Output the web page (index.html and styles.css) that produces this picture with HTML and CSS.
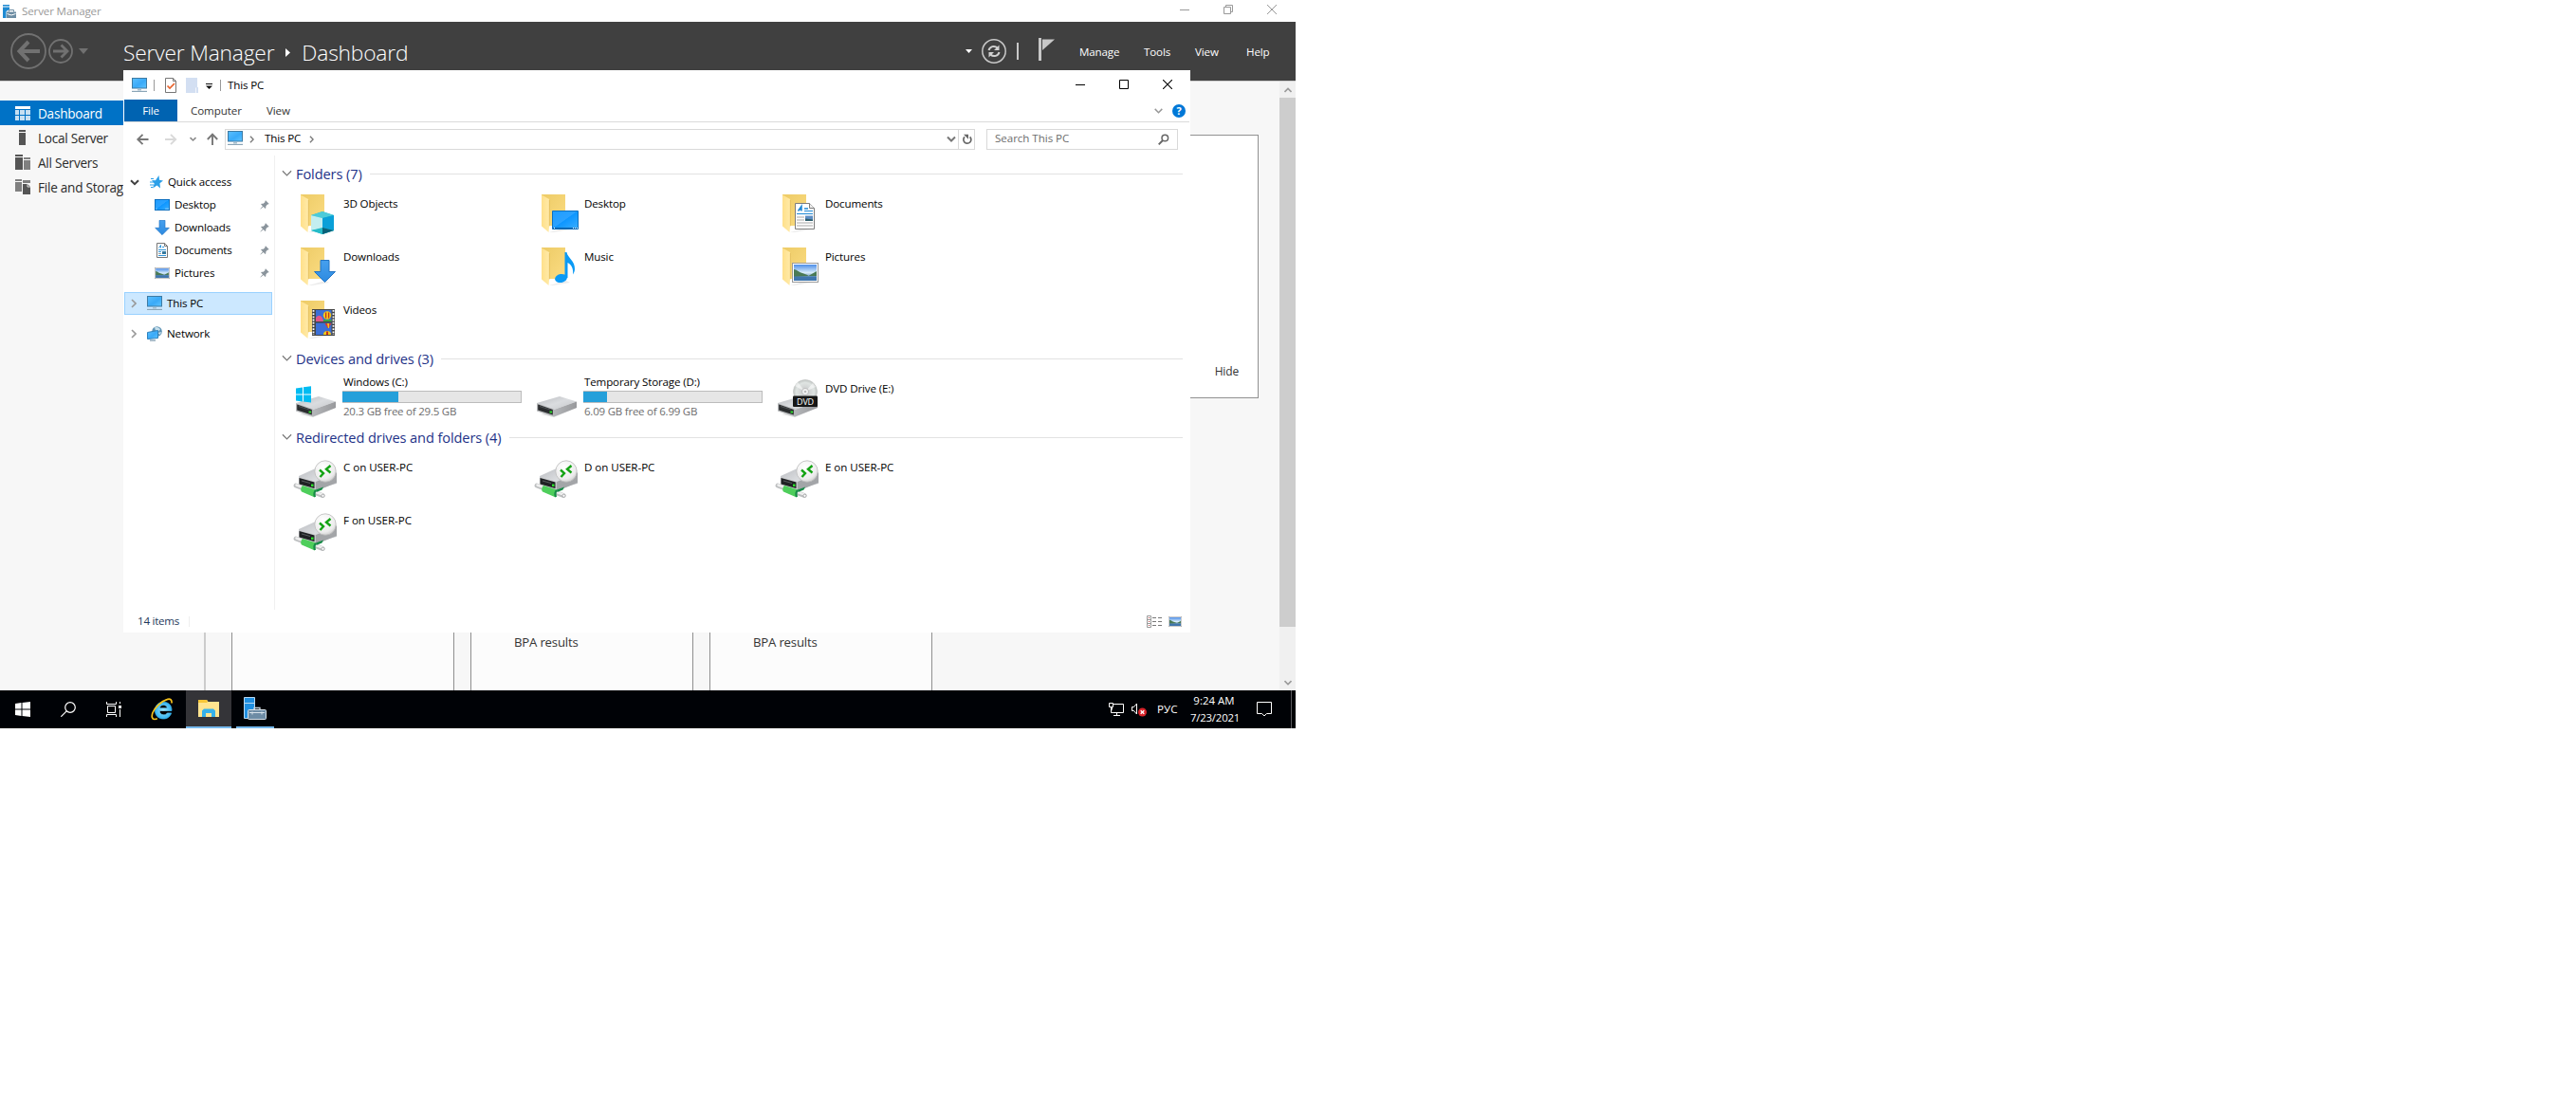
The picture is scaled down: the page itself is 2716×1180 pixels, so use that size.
FILE: index.html
```html
<!DOCTYPE html>
<html lang="en">
<head>
<meta charset="utf-8">
<title>Server Manager</title>
<link rel="stylesheet" href="styles.css">
</head>
<body>
<svg class="defs" aria-hidden="true">
  <defs>
    <linearGradient id="gBlue" x1="0" y1="0" x2="1" y2="1"><stop offset="0" stop-color="#5cc0ff"/><stop offset=".55" stop-color="#3aaaf8"/><stop offset="1" stop-color="#5fc4ff"/></linearGradient>
    <linearGradient id="gDesk" x1="0" y1="0" x2="1" y2="1"><stop offset="0" stop-color="#1f9cff"/><stop offset=".48" stop-color="#2ba2ff"/><stop offset=".5" stop-color="#0d96ff"/><stop offset="1" stop-color="#3aaeff"/></linearGradient>
    <linearGradient id="gBack" x1="0" y1="0" x2="1" y2="1"><stop offset="0" stop-color="#edcb66"/><stop offset="1" stop-color="#fbdc82"/></linearGradient>
    <linearGradient id="gFlap" x1="0" y1="0" x2="1" y2="0"><stop offset="0" stop-color="#ffe08a"/><stop offset="1" stop-color="#ffeaa8"/></linearGradient>
    <linearGradient id="gTop" x1="0" y1="0" x2="1" y2="1"><stop offset="0" stop-color="#b9bbbf"/><stop offset=".5" stop-color="#dadcdf"/><stop offset="1" stop-color="#c6c8cb"/></linearGradient>
    <linearGradient id="gSide" x1="0" y1="0" x2="1" y2="0"><stop offset="0" stop-color="#b4b6b9"/><stop offset="1" stop-color="#98999c"/></linearGradient>
    <linearGradient id="gSky" x1="0" y1="0" x2="0" y2="1"><stop offset="0" stop-color="#4e8ee8"/><stop offset=".5" stop-color="#d7ecfa"/><stop offset=".72" stop-color="#7fa5c4"/><stop offset="1" stop-color="#3a6ea5"/></linearGradient>
    <linearGradient id="gArrow" x1="0" y1="0" x2="0" y2="1"><stop offset="0" stop-color="#46a0ee"/><stop offset="1" stop-color="#2d8ae0"/></linearGradient>
    <radialGradient id="gBall" cx=".4" cy=".3" r=".8"><stop offset="0" stop-color="#fff"/><stop offset=".7" stop-color="#ececec"/><stop offset="1" stop-color="#c4c4c4"/></radialGradient>
    <radialGradient id="gDisc"><stop offset="0" stop-color="#eee"/><stop offset=".3" stop-color="#cfd1d1"/><stop offset=".75" stop-color="#dfe4e2"/><stop offset="1" stop-color="#c2c6c4"/></radialGradient>
    <radialGradient id="gIe"><stop offset="0" stop-color="#9be6ff"/><stop offset="1" stop-color="#35b4f0"/></radialGradient>
  </defs>

  <symbol id="pc" viewBox="0 0 16 16">
    <rect x=".5" y=".5" width="15" height="10.5" fill="url(#gBlue)" stroke="#3f7ba3"/>
    <path d="M6 12h4v1.500H6z" fill="#a9c0cf"/><path d="M0 13.800h16v1.200H0z" fill="#8ba5b7"/>
  </symbol>
  <symbol id="desk" viewBox="0 0 16 12">
    <rect x=".5" y=".5" width="15" height="11" fill="url(#gDesk)" stroke="#0e70c0"/>
    <path d="M1.500 10.200h1M11.500 10.200h3" stroke="#fff" stroke-dasharray=".8 .4" stroke-width=".8"/>
  </symbol>
  <symbol id="down" viewBox="0 0 24 24">
    <path d="M7.500.5h9V12.500H23L12 23.500 1 12.500h6.500z" fill="url(#gArrow)" stroke="#2374c4"/>
  </symbol>
  <symbol id="doc" viewBox="0 0 21 28">
    <path d="M.5.5h15l5 5v22H.5z" fill="#fff" stroke="#7d7d7d"/><path d="M15.500.5v5h5" fill="#eee" stroke="#7d7d7d"/>
    <path d="M3.500 8.500 7 3.500V8.500M4.500 7H7M10 6h4" stroke="#1e88d4" stroke-width="1.500" fill="none"/>
    <path d="M10 8.500h9M2 11.500h17" stroke="#1e88d4" stroke-width="1.200"/>
    <path d="M2 15h8M2 18h8M2 21h17M2 24h17" stroke="#a7a7a7"/><rect x="11" y="13.500" width="8" height="5.500" fill="#5d8ec4"/><path d="M11 16.500l8 1V19h-8z" fill="#2e5d6b"/>
  </symbol>
  <symbol id="pic" viewBox="0 0 28 21">
    <rect x=".5" y=".5" width="27" height="20" fill="#fff" stroke="#9b9b9b"/>
    <rect x="2" y="2" width="24" height="17" fill="url(#gSky)"/>
    <path d="M2 7c3 0 5 3 9 4l8 3-17 1zM26 9l-7 4-3 1h10z" fill="#4a7a55"/><path d="M2 14.500h24V19H2z" fill="#4076ad"/>
  </symbol>
  <symbol id="pin" viewBox="0 0 10 10">
    <path d="M6 .3 9.700 4 8.600 4.600 8 4.500 6.300 6.400v1.800l-.7.7L3.800 7 .7 9.600.4 9.300 3 6.200 1.100 4.400l.7-.7h1.800L5.500 2 5.400 1.200z" fill="#8a949c"/>
  </symbol>
  <symbol id="folder" viewBox="0 0 48 48">
    <path d="M9 3h25v33H9z" fill="url(#gBack)"/>
    <path d="M17 43l18-5 4 2-18 3z" fill="#ececec"/>
    <path d="M9 3.500 17 8v29.500L16.500 43 9 36.500z" fill="url(#gFlap)"/><path d="M17.300 9v27.500" stroke="#dcb654" stroke-width=".6"/>
  </symbol>
  <symbol id="drive" viewBox="0 0 42 22">
    <path d="M4 19l14 3 24-10-2-1z" fill="#e6e6e6"/>
    <path d="M0 7 24 0 42 5.500 18 14z" fill="url(#gTop)"/>
    <path d="M18 14 42 5.500V12L18 21.500z" fill="url(#gSide)"/>
    <path d="M0 7 18 13.500v8L0 15.500z" fill="#b5b7b9"/>
    <path d="M1.200 8.600 16.800 14v5.500L1.200 14.500z" fill="#2a2c2e"/><path d="M3 10.500 14 14" stroke="#4f5255"/><rect x="13.500" y="15.500" width="2.500" height="2" fill="#2cdc2c"/>
  </symbol>
  <symbol id="remote" viewBox="0 0 48 42">
    <path d="M6 17 28 7l18 6v12L22 31 6 25z" fill="url(#gTop)"/>
    <path d="M24 23 46 13.500V24L24 33z" fill="#a3a5a8"/>
    <path d="M6 18 24 23v9.500L6 27z" fill="#c6c8ca"/><path d="M6.500 19 22.500 23.500V30L6.500 25.500z" fill="#1f2123"/><path d="M9 22l9 2.500" stroke="#565a5d"/><rect x="19" y="25.500" width="2.500" height="2.500" fill="#2be02b"/>
    <path d="M3 27 31 37.500" stroke="#bdbfc0" stroke-width="4.800" stroke-linecap="round"/><path d="M3.500 26.500 30.500 36.300" stroke="#efefef" stroke-width="2.500" stroke-linecap="round"/>
    <path d="M10 27 24 31.500c-2 2-2 5-1 8L9 33.500c-1.500-2-.5-5 1-6.500z" fill="#4ece5b"/><path d="M24 32c-2 2-2 4-1 7" stroke="#168b47" stroke-width="2.200" fill="none"/><path d="M24 31.500l8-3-1.500 3-6 2.500z" fill="#168b47"/>
    <circle cx="31.500" cy="37.800" r="1.600" fill="#fff" stroke="#a9abac"/>
    <circle cx="34" cy="12" r="11.200" fill="url(#gBall)" stroke="#bbb" stroke-width=".8"/>
    <path d="M28 10.500 32 14 28.500 18" fill="none" stroke="#14a314" stroke-width="2.400"/><path d="M39.500 6 35 9.800 39.500 13.500" fill="none" stroke="#14a314" stroke-width="2.400"/>
  </symbol>
  <symbol id="chev" viewBox="0 0 12 8"><path d="M1 1l5 5 5-5" fill="none" stroke="currentColor" stroke-width="1.300"/></symbol>
  <symbol id="chevR" viewBox="0 0 6 10"><path d="M1 1l4 4-4 4" fill="none" stroke="currentColor" stroke-width="1.600"/></symbol>
  <symbol id="toolbox" viewBox="0 0 24 24">
    <path d="M.5.5h11v22H.5z" fill="#1f8fe0" stroke="#b8d8f0"/><path d="M0 6.500h12" stroke="#b8d8f0"/>
    <path d="M11 14v-2.500h6V14" fill="none" stroke="#c4d4df" stroke-width="1.300"/>
    <rect x="4.500" y="13.500" width="19" height="10" rx="1" fill="#6d8ca5" stroke="#d7e2ea"/><path d="M6 16.500h16M9 15.500v3M19 15.500v3" stroke="#d7e2ea"/>
  </symbol>
</svg>

<main class="screen">
  <header class="sm-title">
    <svg class="sm-logo" viewBox="0 0 14 14"><path d="M0 0h7v1.500H0zM0 2.500h7V5L3.500 7v7H0z" fill="#1e8ad2"/><path d="M4 7.500h10V14H4z" fill="#6d8da3"/><path d="M6.500 7.500V5.500h5v2" fill="none" stroke="#6d8da3"/><path d="M4.500 9.500 9 11l4.500-1.500" stroke="#fff" fill="none"/></svg>
    <span class="sm-name">Server Manager</span>
    <div class="sm-controls">
      <svg width="10" height="10" viewBox="0 0 10 10"><path d="M0 5.500h10" stroke="#999"/></svg>
      <svg width="10" height="10" viewBox="0 0 10 10"><path d="M.5 2.500h7v7h-7zM2.500 2.500v-2h7v7h-2" fill="none" stroke="#999"/></svg>
      <svg width="10" height="10" viewBox="0 0 10 10"><path d="M0 0l10 10M10 0 0 10" stroke="#999"/></svg>
    </div>
  </header>

  <div class="sm-header">
    <svg class="sm-nav" viewBox="0 0 84 40">
      <g fill="none" stroke="#717171"><circle cx="19" cy="20" r="18" stroke-width="1.800"/><circle cx="53" cy="20" r="12" stroke-width="1.800"/><path d="M9 20h22M19 10 9.500 20 19 30" stroke-width="4"/><path d="M45 20h14M53.500 13.500l6.500 6.500-6.500 6.500" stroke-width="2.800"/></g>
      <path d="M72 17h10l-5 6z" fill="#717171"/>
    </svg>
    <h1 class="crumb"><span>Server Manager</span><svg width="5" height="9" viewBox="0 0 5 9"><path d="M0 0l5 4.500L0 9z" fill="#fff"/></svg><span>Dashboard</span></h1>
    <div class="sm-tools">
      <svg width="7" height="4" viewBox="0 0 7 4"><path d="M0 0h7L3.500 4z" fill="#fff"/></svg>
      <svg class="refresh" viewBox="0 0 26 26"><circle cx="13" cy="13" r="12.200" fill="none" stroke="#c8c8c8" stroke-width="1.500"/><path d="M7.500 12c1-4 6-5.500 9-2.500M18.500 14c-1 4-6 5.500-9 2.500" fill="none" stroke="#d0d0d0" stroke-width="2"/><path d="M18.500 6.500V12H13zM7.500 19.500V14H13z" fill="#d0d0d0"/></svg>
      <i class="bar"></i>
      <svg class="flag" viewBox="0 0 17 24"><path d="M0 0h3v24H0z" fill="#c8c8c8"/><path d="M4 1.500h13L4 13z" fill="#c8c8c8"/></svg>
      <nav class="sm-menu"><span>Manage</span><span>Tools</span><span>View</span><span>Help</span></nav>
    </div>
  </div>

  <div class="sm-body">
    <aside class="sm-side">
      <div class="side-item active"><svg width="16" height="15" viewBox="0 0 16 15"><path d="M0 0h16v3H0z" fill="#fff"/><path d="M0 4h4v5H0zM5 4h5v5H5zM11 4h5v5h-5zM0 10h4v5H0zM5 10h5v5H5zM11 10h5v5h-5z" fill="#c7e0f2"/></svg><span>Dashboard</span></div>
      <div class="side-item"><svg width="16" height="16" viewBox="0 0 16 16"><path d="M4 0h7v2H4zM4 3h7v13H4z" fill="#555"/></svg><span>Local Server</span></div>
      <div class="side-item"><svg width="16" height="16" viewBox="0 0 16 16"><path d="M0 0h8v2H0zM0 3h8v13H0z" fill="#555"/><path d="M9 3h7v2H9zM9 6h7v10H9z" fill="#808080"/></svg><span>All Servers</span></div>
      <div class="side-item"><svg width="16" height="16" viewBox="0 0 16 16"><path d="M0 0h7v2H0zM0 3h7v10H0zM8 1h8v3H8z" fill="#808080"/><path d="M8 5h5l3 3v8H8z" fill="#555"/><path d="M13 5v3h3" stroke="#fff" fill="none" stroke-width=".8"/></svg><span>File and Storage</span></div>
    </aside>
    <section class="sm-main">
      <div class="welcome"><span>Hide</span></div>
      <div class="roles">
        <div class="role"></div>
        <div class="role"><span>BPA results</span></div>
        <div class="role"><span>BPA results</span></div>
      </div>
    </section>
    <div class="scroll">
      <svg width="8" height="6" viewBox="0 0 8 6"><path d="M.5 5 4 1.500 7.500 5" fill="none" stroke="#9a9a9a" stroke-width="1.600"/></svg>
      <i class="thumb"></i>
      <svg width="8" height="6" viewBox="0 0 8 6"><path d="M.5 1 4 4.500 7.500 1" fill="none" stroke="#9a9a9a" stroke-width="1.600"/></svg>
    </div>
  </div>

  <footer class="taskbar">
    <div class="task"><svg width="16" height="16" viewBox="0 0 16 16"><path d="M0 2l6.500-1v6.500H0zM7.500.9 16 0v7.500H7.500zM0 8.500h6.500V15L0 14zM7.500 8.500H16V16l-8.500-1z" fill="#fff"/></svg></div>
    <div class="task"><svg width="16" height="16" viewBox="0 0 16 16"><circle cx="10" cy="6" r="5.300" fill="none" stroke="#fff" stroke-width="1.200"/><path d="M6.200 9.800.3 15.700" stroke="#fff" stroke-width="1.200"/></svg></div>
    <div class="task"><svg width="16" height="16" viewBox="0 0 16 16"><path d="M.5 0v2.500h10V0M.5 16v-2.500h10V16M1.500 4.500h8v7h-8zM14.500 0v2M14.500 8v8" fill="none" stroke="#fff"/><path d="M13 4h3v3h-3z" fill="#fff"/></svg></div>
    <div class="task ie"><svg width="24" height="24" viewBox="0 0 24 24"><path d="M22 13.500H9.200c.2 3 2 4.300 4.300 4.300 1.800 0 3-.7 3.800-1.900h4.300c-1.200 3.900-4.300 6.100-8.300 6.100-5.200 0-8.900-3.500-8.900-8.800 0-5.200 3.800-8.900 8.900-8.900 5.500 0 9 3.700 8.700 9.200zM9.300 10.800h8c-.2-2.200-1.800-3.400-3.900-3.400-2.300 0-3.700 1.300-4.100 3.400z" fill="url(#gIe)" stroke="url(#gIe)" stroke-width=".7"/><path d="M22 5.500C22.500 2 20.500.4 17 1.600 11 3.500 4.500 9.500 2 15.500c-1.500 4-.8 7 2 7 .8 0 1.800-.2 2.800-.7" fill="none" stroke="#f5c21c" stroke-width="1.700"/></svg></div>
    <div class="task current"><svg width="22" height="18" viewBox="0 0 22 18"><path d="M0 0h9l1.500 2H22v16H0z" fill="#ffe48f"/><path d="M0 0h9l1 2-1 1H0z" fill="#f7c637"/><path d="M4 18v-6.500L6 9.500h10l2 2V18h-4v-4H8v4z" fill="#35b1ea"/></svg></div>
    <div class="task open"><svg width="24" height="24"><use href="#toolbox"/></svg></div>
    <div class="tray">
      <svg width="16" height="14" viewBox="0 0 16 14"><path d="M4 1.500h11.500v9H3.500V5M8.500 10.500v3M5 13.500h7" fill="none" stroke="#fff"/><path d="M.5.500h4v4h-4zM2.500 4.500v6h2" fill="#000" stroke="#fff"/></svg>
      <svg class="vol" width="16" height="15" viewBox="0 0 16 15"><path d="M.5 4.500h2L5.500 1v11L2.500 8.500h-2z" fill="none" stroke="#fff"/><circle cx="11.500" cy="10" r="4.500" fill="#d8232a"/><path d="M9.700 8.200l3.600 3.600M13.300 8.200l-3.600 3.600" stroke="#fff" stroke-width="1.300"/></svg>
      <span class="lang">РУС</span>
      <div class="clock"><span class="time">9:24 AM</span><span>7/23/2021</span></div>
      <svg class="note" width="16" height="16" viewBox="0 0 16 16"><path d="M.5.5h15v12h-5L8 15l-2.500-2.500h-5z" fill="none" stroke="#fff"/></svg>
      <i class="peek"></i>
    </div>
  </footer>

  <section class="explorer">
    <header class="ex-title">
      <svg class="t-pc"><use href="#pc"/></svg><i class="sep"></i>
      <svg class="t-doc" viewBox="0 0 12 16"><path d="M.5.5h8l3 3v12H.5z" fill="#fff" stroke="#777"/><path d="M8.500.5v3h3" fill="none" stroke="#777"/><path d="M2.500 8.500 5 11l5-5" fill="none" stroke="#e8622c" stroke-width="1.700"/></svg>
      <svg class="t-new" viewBox="0 0 13 16"><path d="M0 0h12v10h1v6H0z" fill="#d3dff2"/><path d="M10.500 16v-5.500" stroke="#f2f6fc"/></svg>
      <svg class="t-drop" viewBox="0 0 7 6"><path d="M0 .5h7" stroke="#111"/><path d="M0 2.500h7L3.500 6z" fill="#111"/></svg><i class="sep s2"></i>
      <span>This PC</span>
      <div class="ex-controls">
        <svg width="10" height="10" viewBox="0 0 10 10"><path d="M0 5.500h10" stroke="#000"/></svg>
        <svg width="10" height="10" viewBox="0 0 10 10"><path d="M.5.500h9v9h-9z" fill="none" stroke="#000"/></svg>
        <svg width="10" height="10" viewBox="0 0 10 10"><path d="M0 0l10 10M10 0 0 10" stroke="#000" stroke-width="1.100"/></svg>
      </div>
    </header>
    <div class="ribbon">
      <span class="file">File</span><span class="tab t1">Computer</span><span class="tab">View</span>
      <div class="rhelp"><svg class="rchev" viewBox="0 0 9 6"><path d="M.7.900 4.500 4.700 8.300.9" fill="none" stroke="#999" stroke-width="1.500"/></svg><b>?</b></div>
    </div>
    <div class="address-row">
      <svg class="arrows" viewBox="0 0 88 14"><g fill="none" stroke-width="1.900"><path d="M13.500 7H2.500M7.500 1.800 2.300 7l5.200 5.200" stroke="#777"/><path d="M31 7h11M37 1.800 42.200 7 37 12.200" stroke="#d9d9d9"/><path d="M57.500 5.200l3 2.800 3-2.800" stroke="#8a8a8a" stroke-width="1.600"/><path d="M81 13V2M75.800 7 81 1.700 86.200 7" stroke="#777"/></g></svg>
      <div class="address">
        <svg class="t-pc"><use href="#pc"/></svg><svg class="cr"><use href="#chevR"/></svg><span>This PC</span><svg class="cr c2"><use href="#chevR"/></svg>
        <div class="a-end"><svg width="10" height="7" viewBox="0 0 10 7"><path d="M1 1.500l4 4 4-4" fill="none" stroke="#777" stroke-width="2"/></svg><i></i><svg width="10" height="12" viewBox="0 0 10 12"><path d="M7.600 3.300A4 4 0 1 1 2 3.400" fill="none" stroke="#666" stroke-width="1.700"/><path d="M1 .7h5v5z" fill="#666"/></svg></div>
      </div>
      <div class="search"><span>Search This PC</span><svg width="12" height="12" viewBox="0 0 12 12"><circle cx="7.300" cy="4.500" r="3.300" fill="none" stroke="#666" stroke-width="1.500"/><path d="M5 7 .7 11.300" stroke="#666" stroke-width="1.900"/></svg></div>
    </div>
    <div class="ex-body">
      <aside class="tree">
        <div class="node root"><svg class="exp dn" viewBox="0 0 10 7"><path d="M1 1.300l4 3.900 4-3.900" fill="none" stroke="#404040" stroke-width="2"/></svg><svg class="n-icon star" viewBox="0 0 14 14"><path d="M9.500 0 10 4.800l4 .7-3.500 2.700.5 5.300-3.500-3L3 13.500l1.700-5L2 5l4 .2z" fill="#2b9fe8"/><path d="M1 3.500h3M0 7h4M0 10h4M1 12.500h2" stroke="#2b9fe8"/></svg><span>Quick access</span></div>
        <div class="node kid"><svg class="k-desk"><use href="#desk"/></svg><span>Desktop</span><svg class="pin"><use href="#pin"/></svg></div>
        <div class="node kid"><svg class="k-down"><use href="#down"/></svg><span>Downloads</span><svg class="pin"><use href="#pin"/></svg></div>
        <div class="node kid"><svg class="k-doc" viewBox="0 0 12 16"><path d="M.5.500h8l3 3v12H.5z" fill="#fff" stroke="#777"/><path d="M8.500.5v3h3" fill="none" stroke="#777"/><path d="M2.500 5.500 4.500 2.500v3M6 4.500h2M2 7.500h8M2 9.500h3M2 13.500h8" fill="none" stroke="#2f94d8"/><path d="M2 11.500h3" stroke="#999"/><path d="M6 9h4v3H6z" fill="#35799f"/></svg><span>Documents</span><svg class="pin"><use href="#pin"/></svg></div>
        <div class="node kid"><svg class="k-pic"><use href="#pic"/></svg><span>Pictures</span><svg class="pin"><use href="#pin"/></svg></div>
        <div class="node root selected"><svg class="exp rt"><use href="#chevR"/></svg><svg class="n-icon"><use href="#pc"/></svg><span>This PC</span></div>
        <div class="node root net"><svg class="exp rt"><use href="#chevR"/></svg><svg class="n-icon" viewBox="0 0 16 16"><circle cx="10.500" cy="5.500" r="5.300" fill="#5e93b5"/><path d="M8 1.500c3-1 5 0 6 2l-2 2-3-1zM11 7l4-1-1 3z" fill="#c5dfec"/><path d="M.5 6.500l11-2v8l-11 1z" fill="url(#gBlue)" stroke="#2f82bd"/><path d="M3 15h6" stroke="#7d9bb0" stroke-width="1.300"/></svg><span>Network</span></div>
      </aside>
      <div class="content">
        <h2 class="group"><svg><use href="#chev"/></svg><span>Folders (7)</span><i></i></h2>
        <div class="tiles folders">
          <div class="tile"><svg class="big" viewBox="0 0 48 48"><use href="#folder" width="48" height="48"/><path d="M20 25l12-4 12 4v16l-12 4-12-4z" fill="#19b5d2"/><path d="M20 25l12-4 12 4-12 3z" fill="#4ccbd9"/><path d="M20 25l12 3v11l-12 2z" fill="#c3eef0"/><path d="M32 28l12-3v16l-12-3z" fill="#0aa0d8"/><path d="M20 41l12-3 12 3-12 4z" fill="#26bcc8"/><path d="M32 38l12 3-12 4z" fill="#0b6178"/></svg><span>3D Objects</span></div>
          <div class="tile"><svg class="big" viewBox="0 0 48 48"><use href="#folder" width="48" height="48"/><path d="M20.500 20.500h27v19h-27z" fill="url(#gDesk)" stroke="#0e70c0"/><path d="M21 38.500h26" stroke="#0e62a8"/><path d="M22 38.500h1M42 38.500h5" stroke="#fff" stroke-dasharray="1 1"/></svg><span>Desktop</span></div>
          <div class="tile"><svg class="big" viewBox="0 0 48 48"><use href="#folder" width="48" height="48"/><use href="#doc" x="22" y="12" width="21" height="28"/></svg><span>Documents</span></div>
          <div class="tile"><svg class="big" viewBox="0 0 48 48"><use href="#folder" width="48" height="48"/><use href="#down" x="22.500" y="16" width="24" height="24"/></svg><span>Downloads</span></div>
          <div class="tile"><svg class="big" viewBox="0 0 48 48"><use href="#folder" width="48" height="48"/><ellipse cx="29.500" cy="35.500" rx="6.500" ry="4.500" fill="#0a9af5" transform="rotate(-10 29.500 35.500)"/><path d="M33.500 8h2c1 6 9 9 8.500 18-.1 2-1 4-2 5.500 1-6-2-11-5.500-12.500V35h-3z" fill="#0a9af5"/></svg><span>Music</span></div>
          <div class="tile"><svg class="big" viewBox="0 0 48 48"><use href="#folder" width="48" height="48"/><use href="#pic" x="19" y="19" width="28" height="21"/></svg><span>Pictures</span></div>
          <div class="tile"><svg class="big" viewBox="0 0 48 48"><use href="#folder" width="48" height="48"/><path d="M21 12h24v28H21z" fill="#454545"/><path d="M22.500 13v26M43.500 13v26" stroke="#fff" stroke-width="1.800" stroke-dasharray="1.800 1.400"/><path d="M25 13h16.500v12H25zM25 26.500h16.500V39H25z" fill="#3b6fd6"/><path d="M25 21c3-4 7-3 8 4h-8z" fill="#e0568a"/><path d="M33 23h8.500v2H33zM33 37h3v2h-3z" fill="#3aa34a"/><circle cx="37" cy="18.500" r="4.200" fill="#f3c51b"/><path d="M35 15.500h1.200v6H35zM38 15.500h1.200v6H38z" fill="#c4311f"/><path d="M34.500 27h7L38.500 32h-1z" fill="#d8392c"/><path d="M37 27h2v5h-1z" fill="#f3c51b"/><path d="M33 39a4 4 0 0 1 8 0z" fill="#f3c51b"/><path d="M36 35.500h2V39h-2z" fill="#c4311f"/></svg><span>Videos</span></div>
        </div>
        <h2 class="group g2"><svg><use href="#chev"/></svg><span>Devices and drives (3)</span><i></i></h2>
        <div class="tiles drives">
          <div class="tile"><svg class="big" viewBox="0 0 48 48"><use href="#drive" x="4" y="22" width="42" height="22"/><path d="M4 13.500l7-1v7H4zM12 12.300l8-1v8.200h-8zM4 20.500h7v7l-7-1zM12 20.500h8V28.500l-8-1z" fill="#00bcf2"/></svg><div class="info"><span>Windows (C:)</span><div class="meter"><i style="width:31.200%"></i></div><small class="fc">20.3 GB free of 29.5 GB</small></div></div>
          <div class="tile"><svg class="big" viewBox="0 0 48 48"><use href="#drive" x="4" y="22" width="42" height="22"/></svg><div class="info"><span>Temporary Storage (D:)</span><div class="meter"><i style="width:13.200%"></i></div><small class="fc">6.09 GB free of 6.99 GB</small></div></div>
          <div class="tile"><svg class="big" viewBox="0 0 48 48"><use href="#drive" x="4" y="22" width="42" height="22"/><circle cx="33" cy="17" r="12.500" fill="url(#gDisc)" stroke="#bcc0be" stroke-width=".6"/><path d="M33 17 22 11l3-4zM33 17l8-9 3 4z" fill="#fff" opacity=".55"/><circle cx="33" cy="17" r="3.500" fill="#f5f5f5" stroke="#aaa" stroke-width=".7"/><circle cx="33" cy="17" r="1.300" fill="#bbb"/><rect x="20" y="21.500" width="26" height="11.500" rx="1" fill="#161616"/><text x="33" y="30.800" class="dvd">DVD</text></svg><span class="dvd-name">DVD Drive (E:)</span></div>
        </div>
        <h2 class="group g3"><svg><use href="#chev"/></svg><span>Redirected drives and folders (4)</span><i></i></h2>
        <div class="tiles remotes">
          <div class="tile"><svg class="big rem"><use href="#remote"/></svg><span>C on USER-PC</span></div>
          <div class="tile"><svg class="big rem"><use href="#remote"/></svg><span>D on USER-PC</span></div>
          <div class="tile"><svg class="big rem"><use href="#remote"/></svg><span>E on USER-PC</span></div>
          <div class="tile"><svg class="big rem"><use href="#remote"/></svg><span>F on USER-PC</span></div>
        </div>
      </div>
    </div>
    <footer class="status">
      <span>14 items</span><i></i>
      <div class="views">
        <svg width="16" height="13" viewBox="0 0 16 13"><path d="M.5.500h4v12h-4zM.5 4.500h4M.5 8.500h4" fill="none" stroke="#999"/><path d="M6 2.500h4M12 2.500h4M6 6.500h4M12 6.500h4M6 10.500h4M12 10.500h4" stroke="#777"/><path d="M2 2h1v1H2zM2 6h1v1H2zM2 10h1v1H2z" fill="#a33"/></svg>
        <svg class="v2" viewBox="0 0 28 21" preserveAspectRatio="none"><use href="#pic" width="28" height="21"/></svg>
      </div>
    </footer>
  </section>
</main>
</body>
</html>
```

FILE: styles.css
```css
* { box-sizing: border-box; }
body { margin: 0; background: #fff; font: 11.6px/16px "Open Sans", "Noto Sans", sans-serif; letter-spacing: -0.15px; color: #000; white-space: nowrap; }
svg { display: block; flex: none; }
i { display: block; flex: none; }
.defs { position: absolute; width: 0; height: 0; }
.screen { position: relative; width: 1366px; height: 768px; display: flex; flex-direction: column; overflow: hidden; }

/* Server Manager window */
.sm-title { height: 23px; display: flex; align-items: center; padding: 0 20px 0 3px; background: #fff; }
.sm-logo { width: 14px; height: 14px; }
.sm-name { margin-left: 6px; color: #999; }
.sm-controls { margin-left: auto; display: flex; gap: 36px; margin-top: -3px; }
.sm-header { height: 62px; background: #404040; display: flex; align-items: center; color: #fff; }
.sm-nav { width: 84px; height: 40px; margin-left: 11px; }
.crumb { margin: 3px 0 0 35px; display: flex; align-items: center; gap: 12px; font-size: 22.8px; line-height: 30px; font-weight: 300; letter-spacing: -0.2px; }
.sm-tools { display: flex; align-items: center; margin-left: auto; padding-right: 28px; }
.refresh { width: 26px; height: 26px; margin-left: 10px; }
.bar { width: 2px; height: 18px; margin-left: 11px; background: #c8c8c8; }
.flag { width: 17px; height: 24px; margin: -4px 0 0 21px; }
.sm-menu { display: flex; margin: 1px 0 0 26px; }
.sm-menu span:nth-child(1) { width: 68px; }
.sm-menu span:nth-child(2) { width: 54px; }
.sm-menu span:nth-child(3) { width: 54px; }
.sm-menu span:nth-child(4) { width: 24px; }
.sm-body { height: 643px; flex: none; display: flex; background: #f7f7f7; border-top: 1px solid #d0d0d0; }
.sm-side { width: 217px; border-right: 2px solid #ccc; padding-top: 20px; }
.side-item { height: 26px; display: flex; align-items: center; gap: 8px; padding-left: 16px; font-size: 13.6px; letter-spacing: -0.25px; color: #2b2b2b; overflow: hidden; }
.side-item span { padding-top: 1px; }
.side-item.active { background: #0072c6; color: #fff; }
.sm-main { width: 1132px; display: flex; flex-direction: column; justify-content: space-between; }
.welcome { width: 1082px; height: 278px; margin: 56px 0 0 28px; border: 1px solid #919191; background: #fff; display: flex; justify-content: flex-end; align-items: flex-end; padding: 0 20px 19px; color: #333; font-size: 12px; }
.roles { display: flex; gap: 17px; margin-left: 27px; height: 100px; }
.role { width: 235px; border: solid #8f8f8f; border-width: 0 1px; background: #fcfcfc; padding: 41px 0 0 45px; font-size: 13.2px; letter-spacing: -0.2px; color: #333; }
.scroll { width: 17px; background: #f0f0f0; display: flex; flex-direction: column; align-items: center; padding: 6px 0 5px; }
.thumb { width: 17px; height: 558px; background: #cdcdcd; margin: 5px 0 auto; }

/* Taskbar */
.taskbar { height: 40px; background: #000206; display: flex; color: #fff; }
.task { width: 48px; display: flex; align-items: center; justify-content: center; }
.task.ie { width: 52px; padding-left: 2px; }
.task.current { background: #343438; border-bottom: 2px solid #76b9ed; }
.task.open { width: 40px; margin-left: 5px; border-bottom: 2px solid #76b9ed; }
.tray { margin-left: auto; display: flex; align-items: center; }
.vol { margin-left: 8px; }
.lang { width: 23px; margin-left: 11px; letter-spacing: 0; }
.clock { width: 52px; margin-left: 12px; display: flex; flex-direction: column; align-items: center; line-height: 18px; font-size: 11.4px; letter-spacing: -0.2px; }
.clock .time { letter-spacing: 0.05px; margin-right: 2px; }
.note { margin-left: 18px; }
.peek { width: 1px; height: 40px; margin: 0 4px 0 20px; background: #5a5a5e; }

/* Explorer window, over the Server Manager window */
.explorer { position: absolute; left: 130px; top: 74px; width: 1125px; height: 593px; background: #fff; display: flex; flex-direction: column; padding-left: 1px; }
.ex-title { height: 31px; display: flex; align-items: center; padding: 0 19px 0 8px; }
.t-pc { width: 16px; height: 16px; }
.sep { width: 1px; height: 12px; background: #999; margin-left: 7px; }
.s2 { margin-left: 8px; margin-right: 7px; }
.t-doc { width: 12px; height: 16px; margin-left: 11px; }
.t-new { width: 13px; height: 16px; margin-left: 10px; }
.t-drop { width: 7px; height: 6px; margin: 2px 0 0 8px; }
.ex-controls { margin-left: auto; display: flex; gap: 36px; margin-top: -1px; }
.ribbon { height: 24px; display: flex; border-bottom: 1px solid #dadada; margin-right: 1px; line-height: 24px; color: #333; }
.file { width: 56px; height: 23px; background: #0063b1; color: #fff; text-align: center; }
.tab.t1 { width: 80px; margin-left: 14px; letter-spacing: -0.1px; }
.rhelp { margin-left: auto; display: flex; align-items: center; gap: 10px; padding-right: 4px; }
.rchev { width: 9px; height: 6px; }
.rhelp b { width: 14px; height: 14px; border-radius: 50%; background: #0078d7; color: #fff; text-align: center; line-height: 14px; font-size: 11px; }
.address-row { height: 35px; display: flex; align-items: center; padding-left: 12px; }
.arrows { width: 88px; height: 14px; }
.address { width: 791px; height: 22px; margin-left: 6px; border: 1px solid #d9d9d9; display: flex; align-items: center; padding-left: 2px; }
.address > span, .search > span { margin-top: -1px; }
.address .t-pc { margin-top: -1px; }
.cr { width: 5px; height: 8px; margin: 1px 11px 0 7px; color: #777; }
.c2 { margin-left: 9px; }
.a-end { margin-left: auto; align-self: stretch; display: flex; align-items: center; padding-right: 2px; }
.a-end i { width: 1px; height: 20px; background: #d9d9d9; margin: 0 4px 0 2px; }
.search { width: 202px; height: 22px; margin-left: 12px; border: 1px solid #d9d9d9; display: flex; align-items: center; justify-content: space-between; padding: 0 8px; color: #6d6d6d; letter-spacing: -0.05px; }
.ex-body { height: 479px; display: flex; }
.tree { width: 159px; border-right: 1px solid #f0f0f0; padding: 16px 2px 0 0; }
.node { height: 24px; display: flex; align-items: center; }
.node.selected { margin-top: 8px; background: #cce8ff; border: 1px solid #99d1ff; }
.selected .exp.rt { margin-left: 6px; }
.net { margin-top: 8px; }
.exp.dn { width: 10px; height: 7px; margin: 0 15px 0 6px; }
.exp.rt { width: 6px; height: 10px; margin: 0 11px 0 7px; color: #999; }
.n-icon { width: 16px; height: 16px; margin-right: 5px; }
.star { width: 14px; height: 14px; margin: 0 5px 0 -4px; }
.kid { padding: 0 3px 0 32px; }
.kid .pin { width: 10px; height: 10px; margin-left: auto; }
.k-desk { width: 16px; height: 12px; margin-right: 5px; }
.k-down { width: 16px; height: 16px; margin-right: 5px; }
.k-doc { width: 12px; height: 16px; margin: 0 7px 0 2px; }
.k-pic { width: 16px; height: 12px; margin-right: 5px; }
.content { width: 957px; padding: 10px 0 0 7px; }
.group { height: 18px; margin: 0 0 10px; display: flex; align-items: center; color: #1e3287; font-size: 14.6px; font-weight: 400; letter-spacing: -0.1px; }
.group svg { width: 11px; height: 8px; color: #777; margin-right: 4px; }
.group i { flex: 1; height: 1px; background: #e2e2e2; margin-left: 8px; }
.g2 { margin: 7px 0 9px; }
.g3 { margin: 8px 0 11px; }
.tiles { display: grid; grid-template-columns: repeat(3, 254px); grid-auto-rows: 48px; row-gap: 8px; padding-left: 11px; }
.tile { display: flex; gap: 6px; }
.tile > span { padding-top: 4px; }
.folders .tile > span { padding-top: 5px; }
.big { width: 48px; height: 48px; }
.big.rem { height: 42px; width: 48px; margin: 4px -1px 0 1px; }
.info { margin: -1px 0 0 -1px; display: flex; flex-direction: column; }
.info > span { padding-left: 1px; }
.meter { width: 189px; height: 13px; margin: 1px 0; background: #e6e6e6; border: 1px solid #bcbcbc; border-left: 0; }
.meter i { height: 11px; background: #26a0da; }
.fc { font-size: 11.5px; letter-spacing: -0.22px; padding-left: 1px; color: #6d6d6d; }
.tile > .dvd-name { padding-top: 6px; }
.remotes .tile > span { letter-spacing: -0.05px; }
.dvd { font: 9px "Open Sans", sans-serif; fill: #fff; text-anchor: middle; }
.status { height: 24px; display: flex; align-items: center; padding: 0 9px 0 14px; color: #1e395b; }
.status span { letter-spacing: -0.25px; }
.status i { width: 1px; height: 11px; background: #eee; margin-left: 10px; }
.views { margin-left: auto; display: flex; gap: 7px; align-items: center; }
.v2 { width: 14px; height: 11px; }
```
